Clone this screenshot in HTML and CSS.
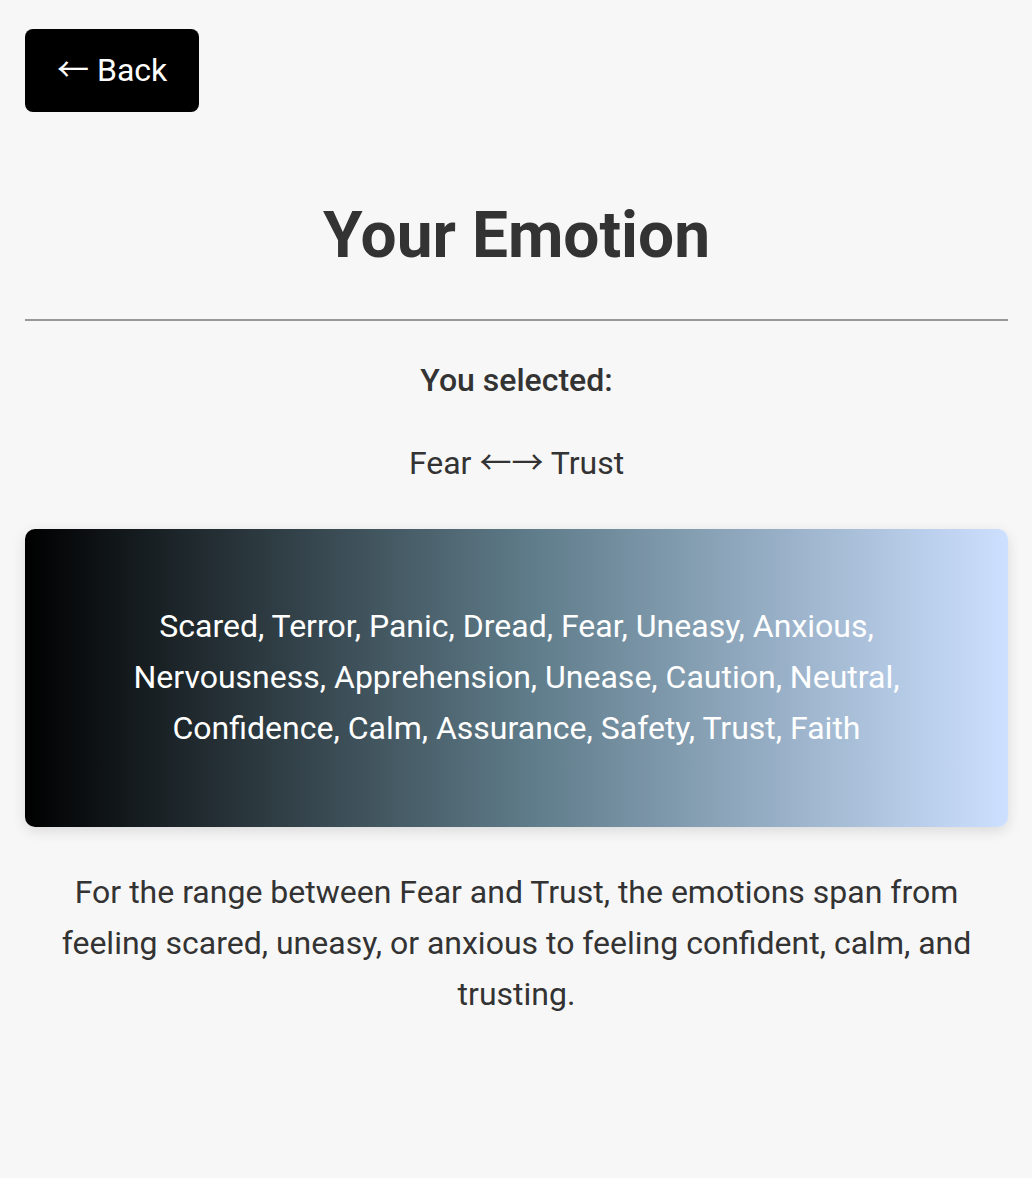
FILE: index.html
```html
<!DOCTYPE html>
<html lang="en">
<head>
<meta charset="utf-8">
<title>Your Emotion</title>
<link rel="stylesheet" href="styles.css">
</head>
<body>
<main class="page">
  <div class="top">
    <button class="back"><span class="arrow">←</span> Back</button>
  </div>
  <h1 class="title">Your Emotion</h1>
  <hr class="rule">
  <p class="selected-label">You selected:</p>
  <p class="selected-pair">Fear <span class="arrow">←→</span> Trust</p>
  <div class="spectrum">
    <p class="spectrum-text">Scared, Terror, Panic, Dread, Fear, Uneasy, Anxious, Nervousness, Apprehension, Unease, Caution, Neutral, Confidence, Calm, Assurance, Safety, Trust, Faith</p>
  </div>
  <p class="description">For the range between Fear and Trust, the emotions span from feeling scared, uneasy, or anxious to feeling confident, calm, and trusting.</p>
</main>
</body>
</html>
```

FILE: styles.css
```css
html, body {
  margin: 0;
  padding: 0;
  background: #f7f7f7;
}
body {
  font-family: Roboto, "Noto Sans", Arial, sans-serif;
  color: #333;
}
.page {
  padding: 29px 24px 40px 25px;
  display: flex;
  flex-direction: column;
}
.top {
  display: flex;
}
.arrow {
  font-family: "Noto Sans CJK SC", sans-serif;
  line-height: 0;
}
.back {
  font-family: Roboto, sans-serif;
  font-size: 32px;
  line-height: 37px;
  padding: 23px 32px;
  background: #000;
  color: #fff;
  border: none;
  border-radius: 8px;
  cursor: pointer;
}
.title {
  margin: 86px 0 0;
  text-align: center;
  font-size: 64px;
  line-height: 75px;
  font-weight: 700;
  color: #333;
}
.rule {
  width: 100%;
  margin: 46px 0 0;
  border: none;
  border-top: 2px solid #999;
}
.selected-label {
  margin: 41px 0 0;
  text-align: center;
  font-size: 32px;
  line-height: 37px;
  font-weight: 500;
}
.selected-pair {
  margin: 46px 0 0;
  text-align: center;
  font-size: 32px;
  line-height: 37px;
}
.spectrum {
  margin-top: 47px;
  border-radius: 10px;
  background: linear-gradient(to right, #000 0%, #607d8b 52%, #cde0ff 100%);
  box-shadow: 0 4px 14px rgba(0, 0, 0, 0.12);
  padding: 72px 72px;
}
.spectrum-text {
  margin: 0;
  text-align: center;
  color: #fff;
  font-size: 32px;
  line-height: 1.6;
}
.description {
  margin: 40px 0 0;
  text-align: center;
  font-size: 32px;
  line-height: 1.6;
  color: #333;
}
```
